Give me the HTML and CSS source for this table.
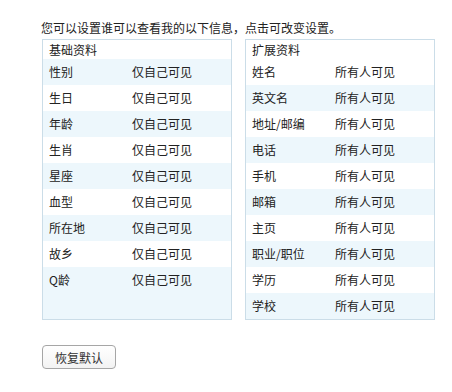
FILE: index.html
```html
<!DOCTYPE html>
<html lang="zh-CN">
<head>
<meta charset="utf-8">
<title>隐私设置</title>
<link rel="stylesheet" href="styles.css">
</head>
<body>
<div class="page">
  <p class="intro">您可以设置谁可以查看我的以下信息，点击可改变设置。</p>
  <div class="panels">
    <div class="panel">
      <div class="head">基础资料</div>
      <div class="row alt"><span class="k">性别</span><span class="v">仅自己可见</span></div>
      <div class="row"><span class="k">生日</span><span class="v">仅自己可见</span></div>
      <div class="row alt"><span class="k">年龄</span><span class="v">仅自己可见</span></div>
      <div class="row"><span class="k">生肖</span><span class="v">仅自己可见</span></div>
      <div class="row alt"><span class="k">星座</span><span class="v">仅自己可见</span></div>
      <div class="row"><span class="k">血型</span><span class="v">仅自己可见</span></div>
      <div class="row alt"><span class="k">所在地</span><span class="v">仅自己可见</span></div>
      <div class="row"><span class="k">故乡</span><span class="v">仅自己可见</span></div>
      <div class="row alt"><span class="k">Q龄</span><span class="v">仅自己可见</span></div>
      <div class="fill"></div>
    </div>
    <div class="panel">
      <div class="head">扩展资料</div>
      <div class="row"><span class="k">姓名</span><span class="v">所有人可见</span></div>
      <div class="row alt"><span class="k">英文名</span><span class="v">所有人可见</span></div>
      <div class="row"><span class="k">地址/邮编</span><span class="v">所有人可见</span></div>
      <div class="row alt"><span class="k">电话</span><span class="v">所有人可见</span></div>
      <div class="row"><span class="k">手机</span><span class="v">所有人可见</span></div>
      <div class="row alt"><span class="k">邮箱</span><span class="v">所有人可见</span></div>
      <div class="row"><span class="k">主页</span><span class="v">所有人可见</span></div>
      <div class="row alt"><span class="k">职业/职位</span><span class="v">所有人可见</span></div>
      <div class="row"><span class="k">学历</span><span class="v">所有人可见</span></div>
      <div class="row alt"><span class="k">学校</span><span class="v">所有人可见</span></div>
      <div class="fill"></div>
    </div>
  </div>
  <button class="reset" type="button">恢复默认</button>
</div>
</body>
</html>
```

FILE: styles.css
```css
html, body {
  margin: 0;
  padding: 0;
  background: #fff;
}
body {
  font-family: "Noto Sans CJK SC", "Noto Sans", sans-serif;
  font-size: 12px;
  color: #222;
}
.page {
  padding: 20px 0 0 42px;
}
.intro {
  margin: 0;
  height: 19px;
  line-height: 16px;
  padding-left: 0;
  margin-left: -1px;
}
.panels {
  display: flex;
  gap: 13px;
}
.panel {
  width: 188px;
  height: 279px;
  border: 1px solid #cbdde8;
  display: flex;
  flex-direction: column;
  background: #fff;
}
.head {
  height: 19px;
  line-height: 19px;
  padding-left: 6px;
  background: #fff;
}
.row {
  height: 26px;
  line-height: 26px;
  display: flex;
  padding-left: 6px;
  background: #fff;
}
.row.alt {
  background: #edf7fc;
}
.k {
  width: 83px;
}
.fill {
  flex: 1;
  background: #edf7fc;
}
.panel:last-child .fill {
  background: #fff;
}
.reset {
  display: block;
  margin-top: 25px;
  width: 74px;
  height: 24px;
  padding: 0;
  border: 1px solid #a6a6a6;
  border-radius: 4px;
  background: linear-gradient(#ffffff, #f3f3f3);
  font-family: "Noto Sans CJK SC", "Noto Sans", sans-serif;
  font-size: 12px;
  color: #333;
}
```
